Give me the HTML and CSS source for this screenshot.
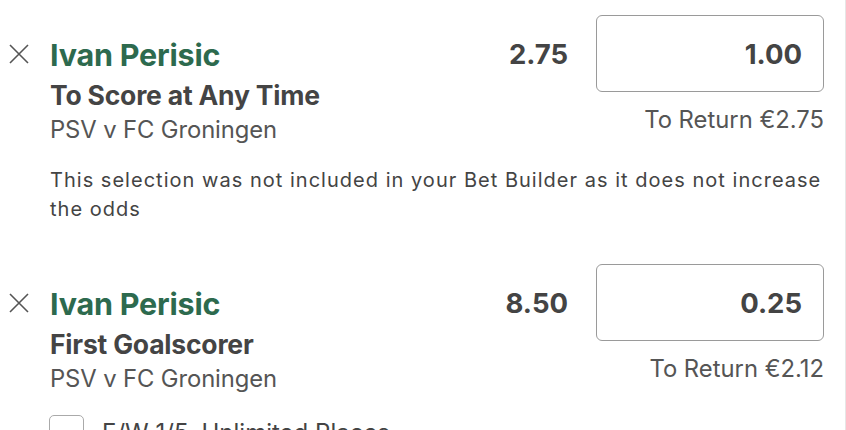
FILE: index.html
```html
<!DOCTYPE html>
<html>
<head>
<meta charset="utf-8">
<link rel="stylesheet" href="styles.css">
</head>
<body>
<div class="page">
  <div class="bet">
    <div class="bet-main">
      <div class="close">
        <svg width="20" height="20" viewBox="0 0 20 20"><path d="M1 1L19 19M19 1L1 19" stroke="#555" stroke-width="1.6" fill="none"/></svg>
      </div>
      <div class="info">
        <div class="name">Ivan Perisic</div>
        <div class="market">To Score at Any Time</div>
        <div class="event">PSV v FC Groningen</div>
      </div>
      <div class="stake">
        <div class="stake-row">
          <div class="odds">2.75</div>
          <div class="box">1.00</div>
        </div>
        <div class="return">To Return €2.75</div>
      </div>
    </div>
    <div class="message">This selection was not included in your Bet Builder as it does not increase the odds</div>
  </div>

  <div class="bet bet-second">
    <div class="bet-main">
      <div class="close">
        <svg width="20" height="20" viewBox="0 0 20 20"><path d="M1 1L19 19M19 1L1 19" stroke="#555" stroke-width="1.6" fill="none"/></svg>
      </div>
      <div class="info">
        <div class="name">Ivan Perisic</div>
        <div class="market">First Goalscorer</div>
        <div class="event">PSV v FC Groningen</div>
      </div>
      <div class="stake">
        <div class="stake-row">
          <div class="odds">8.50</div>
          <div class="box">0.25</div>
        </div>
        <div class="return">To Return €2.12</div>
      </div>
    </div>
    <label class="ew">
      <span class="checkbox"></span>
      <span class="ew-text">E/W 1/5, Unlimited Places</span>
    </label>
  </div>
</div>
</body>
</html>
```

FILE: styles.css
```css
html, body {
  margin: 0;
  padding: 0;
  background: #fff;
}
body {
  font-family: Inter, "Noto Sans", "Liberation Sans", sans-serif;
  color: #444;
  overflow: hidden;
}
.page {
  width: 846px;
  height: 430px;
  box-sizing: border-box;
  border-right: 1px solid #e6e6e6;
  padding-top: 15px;
}
.bet {
  padding-right: 21px;
}
.bet-second {
  margin-top: 40px;
}
.bet-main {
  display: flex;
}
.close {
  width: 50px;
  flex: none;
  padding-top: 29px;
  padding-left: 9px;
  box-sizing: border-box;
}
.close svg {
  display: block;
}
.info {
  flex: 1;
  padding-top: 20px;
}
.name {
  font-size: 30.5px;
  line-height: 40px;
  font-weight: 700;
  color: #2d6a4e;
  letter-spacing: -0.2px;
}
.market {
  font-size: 26.5px;
  line-height: 40px;
  font-weight: 700;
  color: #444;
  letter-spacing: -0.2px;
}
.event {
  font-size: 23.8px;
  line-height: 30px;
  color: #555;
  letter-spacing: -0.1px;
}
.stake {
  display: flex;
  flex-direction: column;
  align-items: flex-end;
}
.stake-row {
  display: flex;
  align-items: center;
  gap: 28px;
}
.odds {
  font-size: 27.5px;
  font-weight: 700;
  color: #444;
}
.box {
  width: 228px;
  height: 77px;
  box-sizing: border-box;
  border: 1.5px solid #9a9a9a;
  border-radius: 6px;
  display: flex;
  align-items: center;
  justify-content: flex-end;
  padding-right: 21px;
  font-size: 27.5px;
  font-weight: 700;
  color: #444;
}
.return {
  margin-top: 14px;
  font-size: 23.8px;
  line-height: 28px;
  color: #555;
}
.message {
  margin-top: 21px;
  padding-left: 50px;
  font-size: 20px;
  line-height: 29px;
  letter-spacing: 1.02px;
  color: #444;
}
.ew {
  display: flex;
  align-items: flex-start;
  gap: 18px;
  margin-top: 21px;
  padding-left: 49px;
}
.checkbox {
  width: 35px;
  height: 35px;
  box-sizing: border-box;
  border: 1.5px solid #aaa;
  border-radius: 5px;
  flex: none;
}
.ew-text {
  font-size: 24px;
  line-height: 30px;
  padding-top: 3px;
  color: #444;
}
```
